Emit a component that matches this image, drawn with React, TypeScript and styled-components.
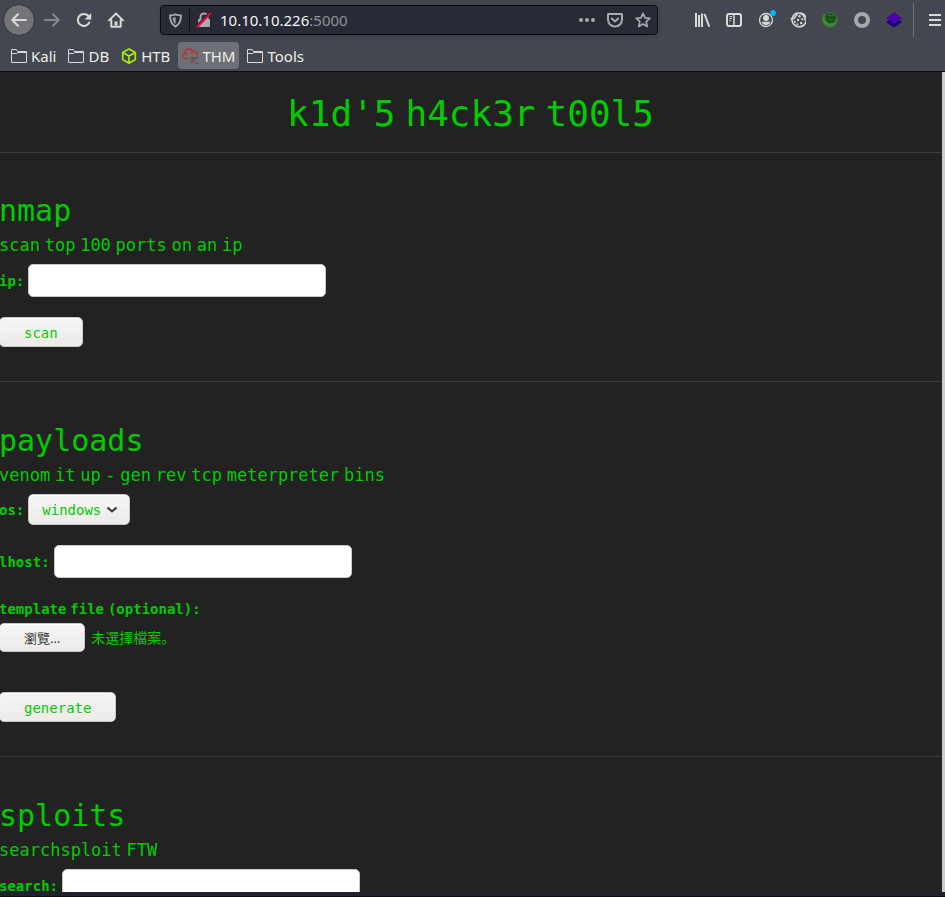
import React, { useId, useState } from "react";
import styled, { createGlobalStyle } from "styled-components";

const mono = '"DejaVu Sans Mono", monospace';
const ui = '"Noto Sans", sans-serif';
const cjk = '"Noto Sans", "Noto Sans CJK SC", sans-serif';
const green = "#00cc00";

const GlobalStyle = createGlobalStyle`
  *, *::before, *::after { box-sizing: border-box; }
  body { margin: 0; background: #222222; }
  button, input, select { font: inherit; }
`;

const Window = styled.div`
  display: flex;
  flex-direction: column;
  height: 100vh;
  overflow: hidden;
  background: #222222;
`;

/* Browser chrome */

const Chrome = styled.header`
  flex: none;
  background: #44474f;
  border-bottom: 1px solid #0c0d10;
  font-family: ${ui};
  color: #eeeeec;
`;

const NavBar = styled.nav`
  display: flex;
  align-items: center;
  height: 40px;
  padding-left: 3px;
`;

const ToolButton = styled.button<{ $width?: number }>`
  display: flex;
  align-items: center;
  justify-content: center;
  flex: none;
  width: ${(p) => p.$width ?? 32}px;
  height: 32px;
  padding: 0;
  color: #d9d9d6;
  background: transparent;
  border: 0;
  &:disabled { color: #85878c; }
`;

const BackButton = styled(ToolButton)`
  margin-right: 1px;
  background: #737478;
  border: 1px solid #2e3036;
  border-radius: 50%;
`;

const AddressBar = styled.div`
  display: flex;
  align-items: center;
  flex: 1;
  min-width: 0;
  height: 30px;
  margin: 0 28px;
  background: #282a36;
  border: 1px solid #0c0d10;
  border-radius: 4px;
  box-shadow: 0 1px 4px rgba(0, 0, 0, 0.15);
`;

const AddressButton = styled(ToolButton)`
  width: 28px;
  height: 28px;
  color: #a9aaad;
`;

const AddressDivider = styled.span`
  flex: none;
  width: 1px;
  height: 22px;
  background: #0c0d10;
`;

const Address = styled.div`
  flex: 1;
  min-width: 0;
  padding-left: 2px;
  font-size: 15px;
  line-height: 20px;
  white-space: nowrap;
  overflow: hidden;
  color: #f4f4f4;
`;

const Port = styled.span`
  color: #8f9197;
`;

const NavDivider = styled.span`
  flex: none;
  width: 1px;
  height: 34px;
  margin: 0 11px 0 3px;
  background: #72747a;
`;

const BookmarkBar = styled.nav`
  display: flex;
  align-items: center;
  gap: 4px;
  height: 31px;
  padding-left: 7px;
`;

const Bookmark = styled.a<{ $active?: boolean }>`
  display: flex;
  align-items: center;
  gap: 4px;
  height: 27px;
  padding: 0 4px;
  font-size: 15px;
  line-height: 20px;
  color: #eeeeec;
  text-decoration: none;
  border-radius: 4px;
  background: ${(p) => (p.$active ? "#6e7075" : "transparent")};
`;

/* Page */

const Viewport = styled.div`
  display: flex;
  flex: 1;
  min-height: 0;
  overflow: hidden;
`;

const Page = styled.main`
  flex: 1;
  min-width: 0;
  margin-left: -1px;
  font-family: ${mono};
  font-size: 14px;
  line-height: 20px;
  color: ${green};
`;

const ScrollThumb = styled.div`
  flex: none;
  width: 3px;
  background: #cdcbc8;
`;

const WindowEdge = styled.footer`
  flex: none;
  height: 5px;
  background: #20222c;
  border-bottom: 1px solid #0c0d10;
`;

const Title = styled.h1`
  margin: 0;
  padding: 22px 0 18px;
  font-size: 36px;
  font-weight: 400;
  line-height: 40px;
  text-align: center;
`;

const Section = styled.section`
  padding: 41px 0 34px;
  border-top: 1px solid #3b3b3b;
  &:first-of-type { padding-top: 40px; }
`;

const Heading = styled.h2`
  margin: 0;
  font-size: 30px;
  font-weight: 400;
  line-height: 36px;
`;

const Lead = styled.p`
  margin: 4px 0 6px;
  font-size: 17px;
  font-weight: 400;
  line-height: 24px;
`;

const Form = styled.form`
  display: flex;
  flex-direction: column;
  align-items: flex-start;
  gap: 20px;
`;

const Field = styled.div`
  display: flex;
  align-items: center;
  gap: 4px;
`;

const FileField = styled.div`
  padding: 1px 0 20px;
`;

const Label = styled.label`
  display: block;
  font-weight: 700;
  white-space: nowrap;
`;

const FileLabel = styled(Label)`
  margin-bottom: 4px;
`;

const TextInput = styled.input`
  width: 298px;
  height: 33px;
  padding: 0 8px;
  color: #222222;
  background: #ffffff;
  border: 1px solid #cdc7c2;
  border-radius: 5px;
`;

const buttonFace = `
  background: linear-gradient(#f6f5f4, #edebe9);
  border: 1px solid #cdc7c2;
  border-radius: 5px;
  box-shadow: inset 0 1px #ffffff;
`;

const SubmitButton = styled.button`
  ${buttonFace}
  height: 30px;
  padding: 2px 24px 0;
  font-family: ${mono};
  line-height: 20px;
  color: ${green};
`;

const SelectBox = styled.div`
  display: grid;
  align-items: center;
  & > * { grid-area: 1 / 1; }
  & > svg { justify-self: end; margin-right: 12px; pointer-events: none; }
`;

const Select = styled.select`
  ${buttonFace}
  appearance: none;
  height: 31px;
  padding: 0 27px 0 13px;
  color: ${green};
`;

const FilePicker = styled.label`
  display: flex;
  align-items: center;
  gap: 6px;
  font-family: ${cjk};
  line-height: 18px;
`;

const FileButton = styled.span`
  ${buttonFace}
  height: 29px;
  padding: 5px 24px 0;
  font-size: 13px;
  color: #2e3436;
`;

const HiddenFile = styled.input`
  width: 1px;
  height: 1px;
  margin: 0 -7px 0 0;
  opacity: 0;
`;

/* Spaces are set in a proportional face so words sit close together. */
const Space = styled.span`
  font-family: "Liberation Sans", sans-serif;
`;

function Words({ children }: { children: string }) {
  return (
    <>
      {children.split(" ").map((word, i) => (
        <React.Fragment key={i}>
          {i > 0 && <Space> </Space>}
          {word}
        </React.Fragment>
      ))}
    </>
  );
}

/* Icons */

const Icon = ({ children, size = 16 }: { children: React.ReactNode; size?: number }) => (
  <svg width={size} height={size} viewBox="0 0 16 16" fill="none" stroke="currentColor" strokeWidth="2" strokeLinecap="round" strokeLinejoin="round" aria-hidden="true">
    {children}
  </svg>
);

const BackIcon = () => <Icon><path d="M15 8H1.500M7 2.200 1.300 8 7 13.800" /></Icon>;
const ForwardIcon = () => <Icon><path d="M1 8h13.500M9 2.200 14.700 8 9 13.800" /></Icon>;
const ReloadIcon = () => (
  <Icon>
    <path d="M13.300 10.500A6 6 0 1 1 12.400 4" />
    <path d="M15.200 1v6.500H8.700z" fill="currentColor" stroke="none" />
  </Icon>
);
const HomeIcon = () => (
  <Icon>
    <path d="M1 8.400 8 1.500l7 6.900" />
    <path d="M3.300 8v6.700h9.400V8" />
    <path d="M8 9.500v4" strokeWidth="3" strokeLinecap="butt" />
  </Icon>
);
const ShieldIcon = () => (
  <Icon size={15}>
    <path d="M8 1.400c1.800.7 3.800 1.100 5.800 1.200 0 5.400-1.200 9.200-5.800 11.900-4.600-2.700-5.800-6.500-5.800-11.900 2-.1 4-.5 5.800-1.200z" />
    <path d="M8 4.200v7.800C6 10.300 5.300 8.300 5.100 5.100z" fill="currentColor" stroke="none" />
  </Icon>
);
const LockIcon = () => (
  <Icon>
    <path d="M4.500 7.500V5a3.500 3.500 0 0 1 7 0v2.500" />
    <rect x="2" y="7" width="12" height="8" rx="1" fill="currentColor" stroke="none" />
    <path d="M1 13.700 13.200 1" stroke="#282a36" strokeWidth="2" />
    <path d="M1.500 14.700 14.300 1.500" stroke="#f0043c" />
  </Icon>
);
const DotsIcon = () => (
  <Icon>
    <g fill="currentColor" stroke="none">
      <circle cx="2" cy="8" r="2" /><circle cx="8" cy="8" r="2" /><circle cx="14" cy="8" r="2" />
    </g>
  </Icon>
);
const PocketIcon = () => (
  <Icon>
    <path d="M1.500 2h13a.6.6 0 0 1 .5.600V7.500a7 7 0 0 1-14 0V2.600a.6.6 0 0 1 .5-.6z" />
    <path d="M4.800 6.500 8 9.500l3.200-3" />
  </Icon>
);
const StarIcon = () => (
  <Icon><path d="m8 1.300 2 4.500 4.800.5-3.600 3.300 1 4.900L8 12l-4.200 2.500 1-4.900L1.200 6.300 6 5.800z" strokeWidth="1.700" /></Icon>
);
const LibraryIcon = () => (
  <Icon><path d="M2 1v14M5 3v12M8 1.500V15M10.500 2l4.800 12.700" strokeLinecap="butt" /></Icon>
);
const SidebarIcon = () => (
  <Icon>
    <rect x="1" y="2" width="14" height="12" rx="2" />
    <path d="M8 2v12" strokeWidth="1.500" />
    <path d="M3.500 4.500H6M3.500 6.500H6M3.500 8.500H5" strokeWidth="1" strokeLinecap="butt" />
  </Icon>
);
const AccountIcon = () => (
  <svg width="20" height="20" viewBox="0 0 20 20" aria-hidden="true">
    <circle cx="10" cy="10" r="6.500" fill="none" stroke="#d9d9d6" strokeWidth="1.300" />
    <circle cx="10" cy="8" r="3" fill="#d9d9d6" />
    <path d="M5.600 11.800h8.800a4.600 4.600 0 0 1-8.800 0z" fill="#d9d9d6" />
    <circle cx="17" cy="3" r="3" fill="#00b3f4" />
  </svg>
);
const CookieIcon = () => (
  <Icon>
    <path d="M7 1a7.100 7.100 0 1 0 4-.1M7 1c.3 2-.3 3-1.700 3.300C5 6 3.700 7 1.100 6.800" strokeWidth="1.500" />
    <path d="M8 1a7.100 7.100 0 0 1 7 7" strokeWidth="1.500" />
    <g fill="currentColor" stroke="none">
      <circle cx="9.500" cy="4.300" r="1.200" /><circle cx="12.300" cy="7.200" r="1.100" /><circle cx="8" cy="8" r="1.200" />
      <circle cx="4.800" cy="9.800" r="1.100" /><circle cx="7.300" cy="12.300" r="1.100" /><circle cx="11.200" cy="11" r="1.200" />
    </g>
  </Icon>
);
const GlobeIcon = () => (
  <svg width="16" height="16" viewBox="0 0 16 16" aria-hidden="true">
    <path d="M1 1.500 4 2 8 0l5 1.500 3 4-.5 5.500L11 15l-4 1-5-3L0 8.500z" fill="#38782f" />
    <path d="m4.500 2 4-.8 4.500 2 1 3.300-2.500 4-4 .5L4 8.500 3.500 5z" fill="#1b4a1c" />
    <path d="m6 3.500 3.500.5L12 3.500M6 6.500l2.500 1.500L11 7.500" fill="none" stroke="#38782f" />
    <path d="m1 5 1.500 5L7 13.500l6-2" fill="none" stroke="#46944a" strokeWidth="1.200" />
  </svg>
);
const RingIcon = () => (
  <svg width="16" height="16" viewBox="0 0 16 16" aria-hidden="true">
    <circle cx="8" cy="8" r="6" fill="none" stroke="#a9a9a9" strokeWidth="4" />
  </svg>
);
const LayersIcon = () => (
  <svg width="16" height="16" viewBox="0 0 16 16" aria-hidden="true">
    <path d="M8 4.500 16 10l-8 5.500L0 10z" fill="#1d0073" />
    <path d="m8 0 7.800 6.200L8 12 .2 6.200z" fill="#4a00ad" />
  </svg>
);
const MenuIcon = () => (
  <svg width="12" height="12" viewBox="0 0 12 12" aria-hidden="true">
    <path d="M0 1h12M0 6h12M0 11h12" stroke="currentColor" strokeWidth="2" />
  </svg>
);
const FolderIcon = () => (
  <svg width="16" height="16" viewBox="0 0 16 16" fill="none" stroke="#d9d9d6" strokeLinejoin="round" aria-hidden="true">
    <path d="M.5 14.500v-13h4.800l1.200 2h9v11zM.5 5.500h5l1.500-1h8.500" />
  </svg>
);
const CubeIcon = () => (
  <svg width="16" height="16" viewBox="0 0 16 16" fill="none" stroke="#9fef00" strokeWidth="1.700" strokeLinejoin="round" aria-hidden="true">
    <path d="m8 1 6.300 3.400v7.200L8 15.200l-6.300-3.600V4.400zM1.700 4.400 8 8l6.300-3.600M8 8v7" />
  </svg>
);
const CloudIcon = () => (
  <svg width="16" height="16" viewBox="0 0 16 16" fill="none" aria-hidden="true">
    <path d="M7 10.500H3A2.600 2.600 0 0 1 2.500 5.400C3 2 5 .6 7.500.8c2 .1 3 1.200 3.500 2.700 2.500-.5 4.500 1.200 4.500 3.500v.5M2.500 5.400c1.300-.2 2.200.2 3 1.200M11 3.500c-1 .2-1.800.8-2 1.700" stroke="#c2272d" strokeWidth="1.200" />
    <path d="M8 9.500h2M12 9.500h2M10 12.500h4M9 15h2" stroke="#a04a50" />
    <path d="M10 9.500h2M14 9.500h2M8.500 11h6M8.500 13.700h3M13 15h3" stroke="#44474f" />
  </svg>
);
const ChevronIcon = () => (
  <svg width="12" height="8" viewBox="0 0 12 8" fill="none" stroke="#2e3436" strokeWidth="2" aria-hidden="true">
    <path d="m1.500 1.500 4.500 4 4.500-4" />
  </svg>
);

/* Composed parts */

const bookmarks = [
  { name: "Kali", icon: <FolderIcon /> },
  { name: "DB", icon: <FolderIcon /> },
  { name: "HTB", icon: <CubeIcon /> },
  { name: "THM", icon: <CloudIcon />, active: true },
  { name: "Tools", icon: <FolderIcon /> },
];

const extensions = [
  { name: "Library", icon: <LibraryIcon /> },
  { name: "Sidebars", icon: <SidebarIcon /> },
  { name: "Account", icon: <AccountIcon /> },
  { name: "Cookies", icon: <CookieIcon /> },
  { name: "Proxy", icon: <GlobeIcon /> },
  { name: "Recorder", icon: <RingIcon /> },
  { name: "Layers", icon: <LayersIcon /> },
];

function TextField({ label, name }: { label: string; name: string }) {
  const id = useId();
  return (
    <Field>
      <Label htmlFor={id}>{label}</Label>
      <TextInput id={id} name={name} type="text" />
    </Field>
  );
}

function TemplateField() {
  const id = useId();
  const [fileName, setFileName] = useState("未選擇檔案。");
  return (
    <FileField>
      <FileLabel htmlFor={id}><Words>template file (optional):</Words></FileLabel>
      <FilePicker>
        <FileButton>瀏覽…</FileButton>
        <HiddenFile id={id} type="file" name="template" onChange={(e) => setFileName(e.target.files?.[0]?.name ?? "未選擇檔案。")} />
        <span>{fileName}</span>
      </FilePicker>
    </FileField>
  );
}

function BrowserChrome() {
  return (
    <Chrome>
      <NavBar aria-label="Navigation">
        <BackButton aria-label="Back"><BackIcon /></BackButton>
        <ToolButton disabled aria-label="Forward"><ForwardIcon /></ToolButton>
        <ToolButton aria-label="Reload"><ReloadIcon /></ToolButton>
        <ToolButton aria-label="Home"><HomeIcon /></ToolButton>
        <AddressBar>
          <AddressButton aria-label="Tracking protection"><ShieldIcon /></AddressButton>
          <AddressDivider />
          <AddressButton aria-label="Connection is not secure"><LockIcon /></AddressButton>
          <Address>10.10.10.226<Port>:5000</Port></Address>
          <AddressButton aria-label="Page actions"><DotsIcon /></AddressButton>
          <AddressButton aria-label="Save to Pocket"><PocketIcon /></AddressButton>
          <AddressButton aria-label="Bookmark this page"><StarIcon /></AddressButton>
        </AddressBar>
        {extensions.map((item) => (
          <ToolButton key={item.name} aria-label={item.name}>{item.icon}</ToolButton>
        ))}
        <NavDivider />
        <ToolButton $width={20} aria-label="Menu"><MenuIcon /></ToolButton>
      </NavBar>
      <BookmarkBar aria-label="Bookmarks">
        {bookmarks.map((item) => (
          <Bookmark key={item.name} href="#" $active={item.active}>
            {item.icon}
            {item.name}
          </Bookmark>
        ))}
      </BookmarkBar>
    </Chrome>
  );
}

export default function App() {
  const osId = useId();
  return (
    <Window>
      <GlobalStyle />
      <BrowserChrome />
      <Viewport>
        <Page>
          <Title><Words>k1d'5 h4ck3r t00l5</Words></Title>
          <Section>
            <Heading>nmap</Heading>
            <Lead><Words>scan top 100 ports on an ip</Words></Lead>
            <Form>
              <TextField label="ip:" name="ip" />
              <SubmitButton type="button">scan</SubmitButton>
            </Form>
          </Section>
          <Section>
            <Heading>payloads</Heading>
            <Lead><Words>venom it up - gen rev tcp meterpreter bins</Words></Lead>
            <Form>
              <Field>
                <Label htmlFor={osId}>os:</Label>
                <SelectBox>
                  <Select id={osId} name="os">
                    <option>windows</option>
                    <option>linux</option>
                    <option>android</option>
                  </Select>
                  <ChevronIcon />
                </SelectBox>
              </Field>
              <TextField label="lhost:" name="lhost" />
              <TemplateField />
              <SubmitButton type="button">generate</SubmitButton>
            </Form>
          </Section>
          <Section>
            <Heading>sploits</Heading>
            <Lead><Words>searchsploit FTW</Words></Lead>
            <Form>
              <TextField label="search:" name="search" />
            </Form>
          </Section>
        </Page>
        <ScrollThumb />
      </Viewport>
      <WindowEdge />
    </Window>
  );
}
